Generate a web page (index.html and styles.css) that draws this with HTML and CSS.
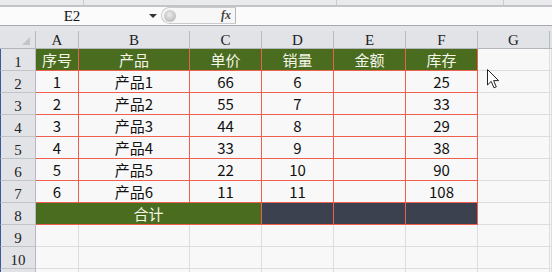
FILE: index.html
```html
<!DOCTYPE html>
<html lang="zh">
<head>
<meta charset="utf-8">
<link rel="stylesheet" href="styles.css">
</head>
<body>
<div class="top">
  <span class="div d1"></span><span class="div d2"></span><span class="div d3"></span>
</div>
<div class="formula">
  <div class="namebox"><span class="name">E2</span><span class="arrow"></span></div>
  <div class="pill"><span class="knob"></span><span class="fx">fx</span></div>
  <div class="input"></div>
</div>
<div class="gap"></div>
<div class="sheet">
  <div class="ch corner"><span class="tri"></span></div>
  <div class="ch">A</div><div class="ch">B</div><div class="ch">C</div><div class="ch">D</div><div class="ch">E</div><div class="ch">F</div><div class="ch">G</div><div class="ch last"></div>

  <div class="rh">1</div>
  <div class="c hd">序号</div><div class="c hd">产品</div><div class="c hd">单价</div><div class="c hd">销量</div><div class="c hd">金额</div><div class="c hd">库存</div><div class="e"></div><div class="e"></div>

  <div class="rh">2</div>
  <div class="c">1</div><div class="c">产品1</div><div class="c">66</div><div class="c">6</div><div class="c"></div><div class="c">25</div><div class="e"></div><div class="e"></div>

  <div class="rh">3</div>
  <div class="c">2</div><div class="c">产品2</div><div class="c">55</div><div class="c">7</div><div class="c"></div><div class="c">33</div><div class="e"></div><div class="e"></div>

  <div class="rh">4</div>
  <div class="c">3</div><div class="c">产品3</div><div class="c">44</div><div class="c">8</div><div class="c"></div><div class="c">29</div><div class="e"></div><div class="e"></div>

  <div class="rh">5</div>
  <div class="c">4</div><div class="c">产品4</div><div class="c">33</div><div class="c">9</div><div class="c"></div><div class="c">38</div><div class="e"></div><div class="e"></div>

  <div class="rh">6</div>
  <div class="c">5</div><div class="c">产品5</div><div class="c">22</div><div class="c">10</div><div class="c"></div><div class="c">90</div><div class="e"></div><div class="e"></div>

  <div class="rh">7</div>
  <div class="c">6</div><div class="c">产品6</div><div class="c">11</div><div class="c">11</div><div class="c"></div><div class="c">108</div><div class="e"></div><div class="e"></div>

  <div class="rh">8</div>
  <div class="c hd merge">合计</div><div class="c dk"></div><div class="c dk"></div><div class="c dk"></div><div class="e"></div><div class="e"></div>

  <div class="rh">9</div>
  <div class="e"></div><div class="e"></div><div class="e"></div><div class="e"></div><div class="e"></div><div class="e"></div><div class="e"></div><div class="e"></div>

  <div class="rh">10</div>
  <div class="e"></div><div class="e"></div><div class="e"></div><div class="e"></div><div class="e"></div><div class="e"></div><div class="e"></div><div class="e"></div>

  <div class="rh"></div>
  <div class="e"></div><div class="e"></div><div class="e"></div><div class="e"></div><div class="e"></div><div class="e"></div><div class="e"></div><div class="e"></div>
</div>
<svg class="cursor" width="13" height="21" viewBox="0 0 13 21">
  <path d="M0.5 0.5 L0.5 16 L4.2 12.4 L7 18.8 L9.3 17.8 L6.6 11.6 L11.6 11.6 Z" fill="#fff" stroke="#222" stroke-width="1" stroke-linejoin="miter"/>
</svg>
</body>
</html>
```
FILE: styles.css
```css
* { box-sizing: border-box; }
html, body { margin: 0; padding: 0; }
body {
  width: 552px;
  height: 272px;
  overflow: hidden;
  background: #f8f8f8;
  position: relative;
  font-family: "Noto Sans CJK SC", "Noto Sans", sans-serif;
}
.top {
  height: 7px;
  background: #e9eaec;
  border-bottom: 2px solid #c2c4c8;
  position: relative;
}
.top .div {
  position: absolute;
  top: 0;
  width: 1px;
  height: 5px;
  background: #c9cbcf;
}
.d1 { left: 83px; }
.d2 { left: 336px; }
.d3 { left: 503px; }
.formula {
  height: 19px;
  display: flex;
  background: #fbfbfb;
  border-bottom: 1px solid #a6a8ac;
}
.namebox {
  width: 160px;
  display: flex;
  align-items: center;
}
.name {
  width: 144px;
  text-align: center;
  font-family: "Liberation Serif", serif;
  font-size: 15px;
  color: #111;
  line-height: 18px;
}
.arrow {
  margin-left: 5px;
  width: 0;
  height: 0;
  border-left: 4px solid transparent;
  border-right: 4px solid transparent;
  border-top: 4px solid #333;
}
.pill {
  margin-left: 1px;
  width: 75px;
  height: 17px;
  border: 1px solid #c9cbcf;
  border-right: 1px solid #b3b5b9;
  border-radius: 9px 0 0 9px;
  display: flex;
  align-items: center;
  justify-content: space-between;
  padding: 0 4px 0 2px;
  background: #f7f7f7;
}
.knob {
  width: 12px;
  height: 12px;
  border-radius: 50%;
  background: radial-gradient(circle at 45% 40%, #ececec 0%, #c8c8c8 55%, #a9a9a9 100%);
}
.fx {
  font-family: "Liberation Serif", serif;
  font-style: italic;
  font-weight: bold;
  font-size: 12px;
  color: #444;
}
.input { flex: 1; background: #fbfbfb; }
.gap {
  height: 5px;
  background: #e3e5e8;
}
.sheet {
  display: grid;
  grid-template-columns: 36px 43px 111px 72px 72px 72px 72px 72px 1fr;
  grid-template-rows: 18px repeat(11, 22px);
}
.ch {
  background: #e1e3e7;
  border-right: 1px solid #b7babf;
  border-bottom: 1px solid #b2b5ba;
  font-family: "Liberation Serif", serif;
  font-size: 15px;
  color: #222;
  text-align: center;
  line-height: 17px;
  padding-top: 1px;
}
.ch.last { border-right: none; }
.corner { position: relative; }
.tri {
  position: absolute;
  left: 22px;
  top: 6px;
  width: 0;
  height: 0;
  border-left: 8px solid transparent;
  border-bottom: 8px solid #c3c5c9;
}
.rh {
  background: #e1e3e7;
  border-left: 1px solid #3b5a9c;
  border-right: 1px solid #b7babf;
  border-bottom: 1px solid #c0c3c7;
  font-family: "Liberation Serif", serif;
  font-size: 15px;
  color: #222;
  text-align: center;
  line-height: 22px;
  padding-top: 2px;
}
.c {
  border-right: 1px solid #ee5f4d;
  border-bottom: 1px solid #ee5f4d;
  background: #f8f8f8;
  font-size: 15px;
  color: #111;
  text-align: center;
  line-height: 21px;
}
.c.hd {
  background: #4a6c1f;
  color: #f5f5ea;
}
.c.merge { grid-column: span 3; }
.c.dk { background: #3c4150; }
.e {
  border-right: 1px solid #dcdde0;
  border-bottom: 1px solid #dcdde0;
}
.cursor {
  position: absolute;
  left: 487px;
  top: 69px;
}
```
